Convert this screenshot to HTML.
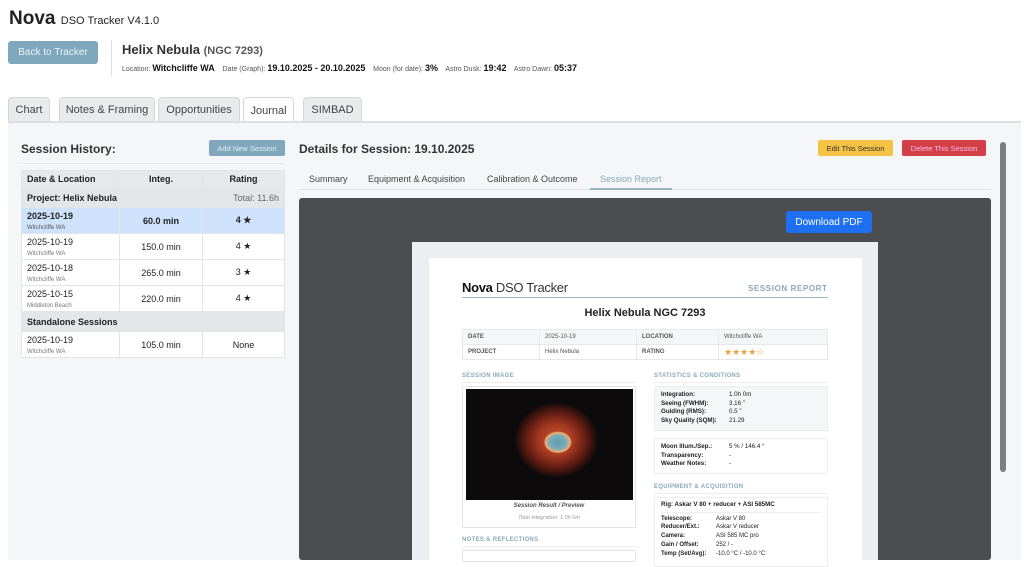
<!DOCTYPE html>
<html><head><meta charset="utf-8"><style>
*{box-sizing:border-box;margin:0;padding:0}
body{width:1024px;height:560px;overflow:hidden;background:#fff;font-family:"Liberation Sans",Arial,sans-serif;color:#222;position:relative}
.a{position:absolute}
.btn{display:flex;align-items:center;justify-content:center}
.tab{position:absolute;top:97px;height:25px;background:#e9eaec;border:1px solid #d5d7da;border-bottom:none;border-radius:4px 4px 0 0;font-size:11px;color:#444;display:flex;align-items:center;justify-content:center}
table{border-collapse:collapse}
.hist td{border:1px solid #e2e4e7;font-size:9px;padding:0 5px}
.rp td{border:1px solid #e6e8ea;font-size:6px;height:15px;padding:0 5px}
.lbl{font-size:6px;font-weight:bold;color:#8aa9bd;letter-spacing:.3px}
.kv{font-size:6.2px;line-height:8.5px}
.kv b{display:inline-block;width:68px}
</style></head><body>
<div class="a" style="left:9px;top:8px;font-size:19px;font-weight:bold">Nova <span style="font-size:11px;font-weight:normal">DSO Tracker V4.1.0</span></div>
<div class="a btn" style="left:8px;top:41px;width:90px;height:23px;background:#7fa8bd;border-radius:3px;color:#e9f2f6;font-size:10px">Back to Tracker</div>
<div class="a" style="left:111px;top:40px;width:1px;height:36px;background:#ddd"></div>
<div class="a" style="left:122px;top:42px;font-size:13px;font-weight:bold;color:#333">Helix Nebula <span style="font-size:11px;color:#555">(NGC 7293)</span></div>
<div class="a" style="left:122px;top:63px;font-size:7px;color:#555;white-space:nowrap">Location: <b style="font-size:9px;color:#111">Witchcliffe WA</b>&nbsp;&nbsp;&nbsp; Date (Graph): <b style="font-size:9px;color:#111">19.10.2025 - 20.10.2025</b>&nbsp;&nbsp;&nbsp; Moon (for date): <b style="font-size:9px;color:#111">3%</b>&nbsp;&nbsp;&nbsp; Astro Dusk: <b style="font-size:9px;color:#111">19:42</b>&nbsp;&nbsp;&nbsp; Astro Dawn: <b style="font-size:9px;color:#111">05:37</b></div>
<div class="tab" style="left:8px;width:42px">Chart</div>
<div class="tab" style="left:59px;width:96px">Notes &amp; Framing</div>
<div class="tab" style="left:158px;width:82px">Opportunities</div>
<div class="tab" style="left:243px;width:51px;background:#fff;height:26px">Journal</div>
<div class="tab" style="left:303px;width:59px">SIMBAD</div>
<div class="a" style="left:8px;top:121px;width:1013px;height:2px;background:#dcdee1"></div>
<div class="a" style="left:8px;top:123px;width:1013px;height:437px;background:#f5f6f8"></div>
<div class="a" style="left:21px;top:142px;font-size:12px;font-weight:bold;color:#333">Session History:</div>
<div class="a btn" style="left:209px;top:140px;width:76px;height:16px;background:#7fa8bd;border-radius:2px;color:#e3eef4;font-size:7.5px">Add New Session</div>
<div class="a" style="left:21px;top:163px;width:264px;height:1px;background:#e6e8eb"></div>
<table class="hist a" style="left:21px;top:170px;width:264px;background:#fff">
<tr style="height:17px;background:#e7e8ea;font-weight:bold"><td style="width:98px"><b>Date &amp; Location</b></td><td style="width:83px;text-align:center"><b>Integ.</b></td><td style="text-align:center"><b>Rating</b></td></tr>
<tr style="height:20px;background:#e4e5e7"><td colspan="2"><b>Project: Helix Nebula</b></td><td style="text-align:right;color:#666">Total: 11.6h</td></tr>
<tr style="height:26px;background:#cfe2fb"><td><b>2025-10-19</b><br><span style="font-size:6px;color:#555">Witchcliffe WA</span></td><td style="text-align:center"><b>60.0 min</b></td><td style="text-align:center"><b>4 ★</b></td></tr>
<tr style="height:26px"><td>2025-10-19<br><span style="font-size:6px;color:#777">Witchcliffe WA</span></td><td style="text-align:center">150.0 min</td><td style="text-align:center">4 ★</td></tr>
<tr style="height:26px"><td>2025-10-18<br><span style="font-size:6px;color:#777">Witchcliffe WA</span></td><td style="text-align:center">265.0 min</td><td style="text-align:center">3 ★</td></tr>
<tr style="height:26px"><td>2025-10-15<br><span style="font-size:6px;color:#777">Middleton Beach</span></td><td style="text-align:center">220.0 min</td><td style="text-align:center">4 ★</td></tr>
<tr style="height:20px;background:#e4e5e7"><td colspan="3"><b>Standalone Sessions</b></td></tr>
<tr style="height:26px"><td>2025-10-19<br><span style="font-size:6px;color:#777">Witchcliffe WA</span></td><td style="text-align:center">105.0 min</td><td style="text-align:center">None</td></tr>
</table>
<div class="a" style="left:299px;top:142px;font-size:12px;font-weight:bold;color:#333">Details for Session: 19.10.2025</div>
<div class="a btn" style="left:818px;top:140px;width:75px;height:16px;background:#f6c244;border-radius:2px;font-size:7.5px;color:#333">Edit This Session</div>
<div class="a btn" style="left:902px;top:140px;width:84px;height:16px;background:#d23f45;border-radius:2px;font-size:7.5px;color:#fbe">Delete This Session</div>
<div class="a" style="left:309px;top:174px;font-size:9px;color:#444">Summary</div>
<div class="a" style="left:368px;top:174px;font-size:9px;color:#444">Equipment &amp; Acquisition</div>
<div class="a" style="left:487px;top:174px;font-size:9px;color:#444">Calibration &amp; Outcome</div>
<div class="a" style="left:600px;top:174px;font-size:9px;color:#8aa9bd">Session Report</div>
<div class="a" style="left:299px;top:189px;width:692px;height:1px;background:#e2e4e7"></div>
<div class="a" style="left:590px;top:188px;width:82px;height:2px;background:#9ab4c4"></div>
<div class="a" style="left:1000px;top:142px;width:6px;height:330px;background:#7d7e80;border-radius:3px"></div>
<div class="a" style="left:299px;top:198px;width:692px;height:362px;background:#4b4d50;border-radius:3px"></div>
<div class="a btn" style="left:786px;top:211px;width:86px;height:22px;background:#1f6ff3;border-radius:3px;color:#fff;font-size:10px">Download PDF</div>
<div class="a" style="left:412px;top:242px;width:466px;height:318px;background:#eceef1"></div>
<div class="a" style="left:429px;top:258px;width:433px;height:302px;background:#fff"></div>
<div class="a" style="left:462px;top:280px;font-size:13px;color:#333;letter-spacing:-.3px"><b style="color:#111">Nova</b> DSO Tracker</div>
<div class="a" style="left:748px;top:284px;font-size:8px;font-weight:bold;color:#8aa9bd;letter-spacing:.6px">SESSION REPORT</div>
<div class="a" style="left:462px;top:297px;width:366px;height:1px;background:#9ab4c4"></div>
<div class="a" style="left:462px;top:307px;width:366px;text-align:center;font-size:11px;font-weight:bold">Helix Nebula NGC 7293</div>
<table class="rp a" style="left:462px;top:329px;width:366px">
<tr style="background:#f4f6f8"><td style="width:77px;font-weight:bold;color:#555">DATE</td><td style="width:97px;color:#555">2025-10-19</td><td style="width:82px;font-weight:bold;color:#555">LOCATION</td><td style="color:#555">Witchcliffe WA</td></tr>
<tr><td style="font-weight:bold;color:#555">PROJECT</td><td style="color:#555">Helix Nebula</td><td style="font-weight:bold;color:#555">RATING</td><td style="color:#e9a23b;font-size:9px">★★★★☆</td></tr>
</table>
<div class="a lbl" style="left:462px;top:373px">SESSION IMAGE</div>
<div class="a" style="left:462px;top:382px;width:174px;height:1px;background:#eee"></div>
<div class="a lbl" style="left:654px;top:373px">STATISTICS &amp; CONDITIONS</div>
<div class="a" style="left:654px;top:382px;width:174px;height:1px;background:#eee"></div>
<div class="a" style="left:462px;top:386px;width:174px;height:142px;border:1px solid #e3e5e8;background:#fff"></div>
<div class="a" style="left:466px;top:389px;width:167px;height:111px;background:radial-gradient(ellipse 14px 11px at 55% 48%,#5fa0aa 0%,#7ab 60%,#f0b070 90%,transparent 100%),radial-gradient(ellipse 42px 38px at 54% 46%,#c8552e 0%,#a83a22 40%,#5a1a12 75%,transparent 100%),#0c0a0b"></div>
<div class="a" style="left:462px;top:503px;width:174px;text-align:center;font-size:6px;font-style:italic;font-weight:bold;color:#555">Session Result / Preview</div>
<div class="a" style="left:462px;top:515px;width:174px;text-align:center;font-size:5.5px;font-style:italic;color:#999">Total integration: 1.0h 0m</div>
<div class="a lbl" style="left:462px;top:537px">NOTES &amp; REFLECTIONS</div>
<div class="a" style="left:462px;top:546px;width:174px;height:1px;background:#eee"></div>
<div class="a" style="left:462px;top:550px;width:174px;height:12px;border:1px solid #e3e5e8"></div>
<div class="a kv" style="left:654px;top:386px;width:174px;height:45px;background:#f4f6f8;border:1px solid #eceef0;padding:4px 6px">
<div><b>Integration:</b>1.0h 0m</div><div><b>Seeing (FWHM):</b>3.16 "</div><div><b>Guiding (RMS):</b>0.5 "</div><div><b>Sky Quality (SQM):</b>21.29</div></div>
<div class="a kv" style="left:654px;top:438px;width:174px;height:36px;border:1px solid #eceef0;padding:4px 6px">
<div><b>Moon Illum./Sep.:</b>5 % / 146.4 °</div><div><b>Transparency:</b>-</div><div><b>Weather Notes:</b>-</div></div>
<div class="a lbl" style="left:654px;top:484px">EQUIPMENT &amp; ACQUISITION</div>
<div class="a" style="left:654px;top:493px;width:174px;height:1px;background:#eee"></div>
<div class="a kv" style="left:654px;top:497px;width:174px;height:70px;border:1px solid #eceef0;padding:3px 6px">
<div style="font-weight:bold;border-bottom:1px solid #eee;padding-bottom:2px;margin-bottom:2px">Rig: Askar V 80 + reducer + ASI 585MC</div>
<div style="font-size:6px;line-height:8.8px"><b style="width:55px">Telescope:</b>Askar V 80<br><b style="width:55px">Reducer/Ext.:</b>Askar V reducer<br><b style="width:55px">Camera:</b>ASI 585 MC pro<br><b style="width:55px">Gain / Offset:</b>252 / -<br><b style="width:55px">Temp (Set/Avg):</b>-10.0 °C / -10.0 °C</div></div>
</body></html>
